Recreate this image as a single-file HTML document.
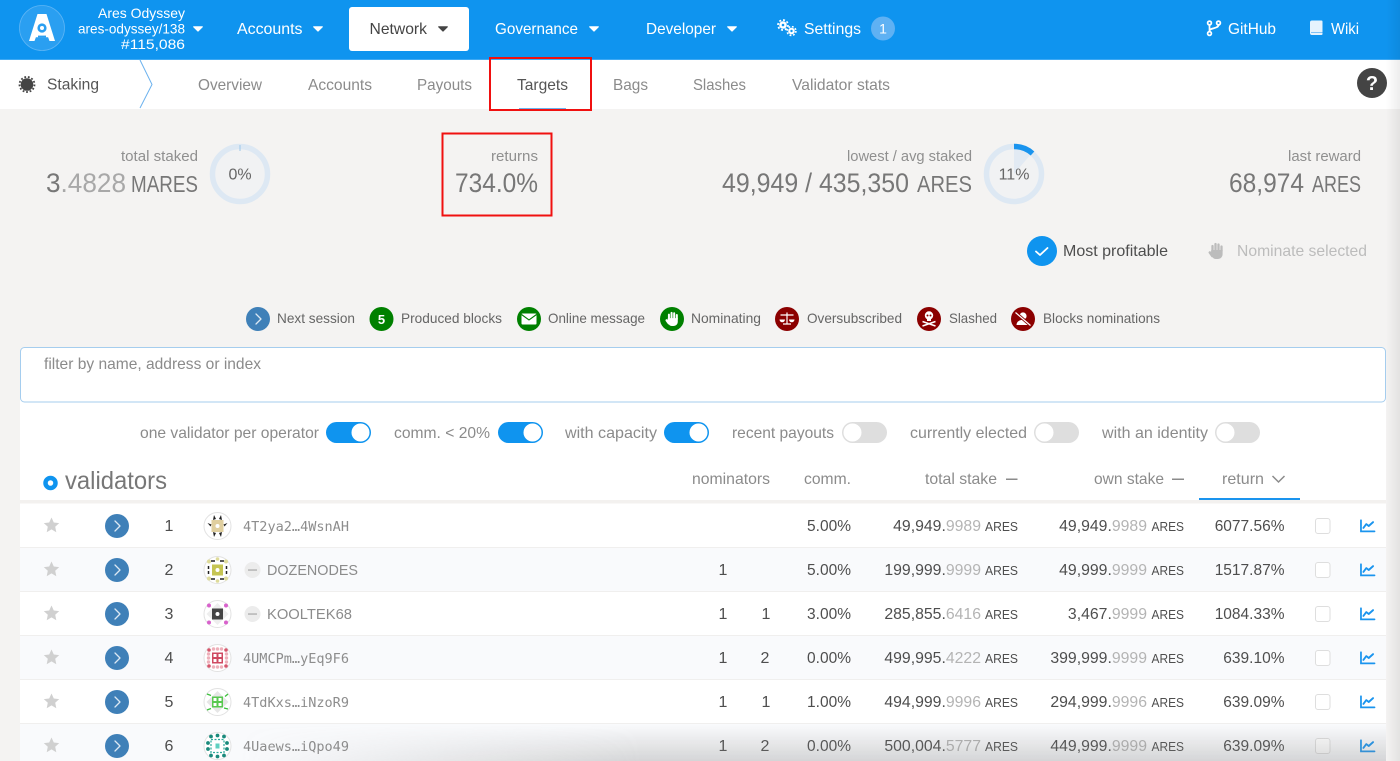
<!DOCTYPE html>
<html><head><meta charset="utf-8"><title>Staking</title>
<style>
html,body{margin:0;padding:0;width:1400px;height:761px;overflow:hidden;background:#f4f3f2}
svg{display:block}
text{font-family:"Liberation Sans",sans-serif;font-size:16px;fill:#8b8b8b}
.w{fill:#fff}.d{fill:#4e4e4e}
.t{font-size:14px;fill:#fff}
.lb{font-size:15px;fill:#8f8f8f}
.m{font-family:"DejaVu Sans Mono","Liberation Mono",monospace;font-size:13.5px;fill:#8d8d8d}
.s{font-size:14px;fill:#666}
.h{font-size:26.500px;fill:#777}
.u{font-size:23px;fill:#777}
.n{fill:#4e4e4e;text-anchor:end;font-size:15.800px}
.n tspan{fill:#b4b4b4}
.a{font-size:12.500px;fill:#4e4e4e}
.c{text-anchor:middle}
.v{fill:#4e4e4e;text-anchor:end;font-size:15.500px}
</style></head><body>
<svg width="1400" height="761" viewBox="0 0 1400 761" xmlns="http://www.w3.org/2000/svg">
<defs>
<linearGradient id="g1" x1="0" x2="1" y1="0" y2="0"><stop offset="0" stop-color="#000" stop-opacity="0"/><stop offset="1" stop-color="#000" stop-opacity=".07"/></linearGradient>
<linearGradient id="g2" x1="0" x2="0" y1="0" y2="1"><stop offset="0" stop-color="#888" stop-opacity="0"/><stop offset="1" stop-color="#888" stop-opacity=".32"/></linearGradient>
<linearGradient id="g3" x1="0" x2="1" y1="0" y2="0"><stop offset="0" stop-color="#fff" stop-opacity="0"/><stop offset=".35" stop-color="#fff" stop-opacity="1"/></linearGradient>
<mask id="fade" maskUnits="userSpaceOnUse" x="240" y="720" width="1146" height="41"><rect x="240" y="720" width="1146" height="41" fill="url(#g3)"/></mask>
<symbol id="star" viewBox="0 0 16 16"><path d="M8 .5l2.3 5 5.4.6-4 3.700 1.100 5.400L8 12.400l-4.800 2.800 1.100-5.400-4-3.700 5.400-.6z" fill="#d0d0d0"/></symbol>
<symbol id="go" viewBox="0 0 24 24"><circle cx="12" cy="12" r="12" fill="#3f80b8"/><path d="M10 7l5 5-5 5" fill="none" stroke="#dbe8f3" stroke-width="1.300" stroke-linecap="round" stroke-linejoin="round"/></symbol>
<symbol id="chart" viewBox="0 0 16 14"><path d="M1 1v11.500h14" fill="none" stroke="#1a94ee" stroke-width="1.800" stroke-linecap="round"/><path d="M3.500 9l3-4 2.500 2 4.500-4" fill="none" stroke="#1a94ee" stroke-width="1.900" stroke-linecap="round" stroke-linejoin="round"/></symbol>
<symbol id="care" viewBox="0 0 10 6"><path d="M.6.3h8.800a.5.5 0 0 1 .4.8L5.400 5.500a.6.6 0 0 1-.8 0L.2 1.100A.5.5 0 0 1 .6.3z"/></symbol>
<symbol id="hand" viewBox="0 0 16 18"><g stroke="currentColor" stroke-width="2.300" stroke-linecap="round" fill="none"><path d="M4.500 9V4M7.500 8V2M10.500 8V2.500M13.500 9V4.500"/><path d="M1.800 10.500l2.500 3.500" stroke-width="2.500"/></g><path d="M3.300 8h11.300v4c0 3-2 5-5 5H8c-2 0-3-1-4-2.500L2.800 11z" fill="currentColor"/></symbol>
</defs>

<!-- top bar -->
<rect width="1400" height="60" fill="#0f94ef"/>
<circle cx="42" cy="28" r="22.500" fill="#2a9ff1" stroke="#5db5f5" stroke-width=".8"/>
<path d="M37.500 14h9L55 41h-5.500l-1.400-3.800H35.900L34.500 41H29z" fill="#fff"/>
<circle cx="42" cy="28" r="4.600" fill="#2a9ff1"/><circle cx="42" cy="28" r="2" fill="#fff"/>
<rect x="38" y="35.600" width="8" height="1.800" fill="#2a9ff1"/>
<text class="t" x="98" y="18" textLength="87" lengthAdjust="spacingAndGlyphs">Ares Odyssey</text>
<text class="t" x="78" y="33.500" textLength="107" lengthAdjust="spacingAndGlyphs">ares-odyssey/138</text>
<text class="t" x="121" y="49" textLength="64" lengthAdjust="spacingAndGlyphs">#115,086</text>
<use href="#care" x="193" y="26" width="10" height="6" fill="#fff"/>
<text class="w" x="237" y="34" textLength="65.500" lengthAdjust="spacingAndGlyphs">Accounts</text>
<use href="#care" x="313" y="26" width="10" height="6" fill="#fff"/>
<rect x="349" y="7" width="120" height="44" rx="3" fill="#fff"/>
<text x="369.500" y="34" style="fill:#444" textLength="57.500" lengthAdjust="spacingAndGlyphs">Network</text>
<use href="#care" x="438" y="26" width="10" height="6" fill="#444"/>
<text class="w" x="495" y="34" textLength="83" lengthAdjust="spacingAndGlyphs">Governance</text>
<use href="#care" x="589" y="26" width="10" height="6" fill="#fff"/>
<text class="w" x="646" y="34" textLength="70" lengthAdjust="spacingAndGlyphs">Developer</text>
<use href="#care" x="727" y="26" width="10" height="6" fill="#fff"/>
<circle cx="783" cy="25" r="3.800" fill="#fff"/><circle cx="783" cy="25" r="5" fill="none" stroke="#fff" stroke-width="1.700" stroke-dasharray="2 1.900"/><circle cx="783" cy="25" r="1.300" fill="#0f94ef"/>
<circle cx="791.500" cy="31" r="3.300" fill="#fff"/><circle cx="791.500" cy="31" r="4.400" fill="none" stroke="#fff" stroke-width="1.600" stroke-dasharray="1.800 1.700"/><circle cx="791.500" cy="31" r="1.200" fill="#0f94ef"/>
<text class="w" x="804" y="34" textLength="57" lengthAdjust="spacingAndGlyphs">Settings</text>
<circle cx="883" cy="28.500" r="12" fill="#5fb1f3"/>
<text class="t c" x="883" y="33.500">1</text>
<g fill="none" stroke="#fff" stroke-width="1.700"><circle cx="1209.500" cy="23" r="1.900"/><circle cx="1209.500" cy="33.500" r="1.900"/><circle cx="1218.500" cy="23" r="1.900"/><path d="M1209.500 25v6.500M1218.500 25c0 4-9 2.500-9 6"/></g>
<text class="w" x="1228" y="34" textLength="48" lengthAdjust="spacingAndGlyphs">GitHub</text>
<path d="M1312 20.500h9.500a1 1 0 0 1 1 1v12.500a1 1 0 0 1-1 1H1312a2 2 0 0 1-2-2V22.500a2 2 0 0 1 2-2z" fill="#e6f3fd"/><path d="M1311 32.500h11.500" stroke="#7fc1f5" stroke-width="1"/>
<text class="w" x="1331" y="34" textLength="28" lengthAdjust="spacingAndGlyphs">Wiki</text>
<rect y="59" width="1400" height="1" fill="#3fa9f3"/>

<!-- sub nav -->
<rect y="60" width="1400" height="49" fill="#fff"/>
<circle cx="27" cy="84.500" r="6.300" fill="#444"/><circle cx="27" cy="84.500" r="7.500" fill="none" stroke="#444" stroke-width="1.800" stroke-dasharray="1.800 1.800"/>
<text x="47" y="89.500" style="fill:#555" textLength="52" lengthAdjust="spacingAndGlyphs">Staking</text>
<path d="M140 60l12 24.500L140 108" fill="none" stroke="#6cb2ee" stroke-width="1"/>
<text x="198" y="90" textLength="64" lengthAdjust="spacingAndGlyphs">Overview</text>
<text x="308" y="90" textLength="64" lengthAdjust="spacingAndGlyphs">Accounts</text>
<text x="417" y="90" textLength="55" lengthAdjust="spacingAndGlyphs">Payouts</text>
<text x="517" y="90" style="fill:#555" textLength="51" lengthAdjust="spacingAndGlyphs">Targets</text>
<text x="613" y="90" textLength="35" lengthAdjust="spacingAndGlyphs">Bags</text>
<text x="693" y="90" textLength="53" lengthAdjust="spacingAndGlyphs">Slashes</text>
<text x="792" y="90" textLength="98" lengthAdjust="spacingAndGlyphs">Validator stats</text>
<rect x="519" y="108" width="47" height="1.500" fill="#6cb2ee"/>
<rect x="490" y="58" width="101" height="52" fill="none" stroke="#f01010" stroke-width="2"/>
<circle cx="1372" cy="83" r="15" fill="#444"/>
<text class="w c" x="1372" y="90" style="font-size:20px;font-weight:bold">?</text>

<!-- stats -->
<text class="lb" x="121" y="161" textLength="77" lengthAdjust="spacingAndGlyphs">total staked</text>
<text class="h" x="46" y="192" textLength="80" lengthAdjust="spacingAndGlyphs">3<tspan fill="#a8a8a8">.4828</tspan></text>
<text class="u" x="131" y="192" textLength="67" lengthAdjust="spacingAndGlyphs">MARES</text>
<circle cx="240" cy="174" r="27.500" fill="#f1f2f3" stroke="#dde8f3" stroke-width="5.500"/>
<rect x="239.500" y="145" width="1" height="6" fill="#9cc6ea"/>
<text class="c" x="240" y="179.500" style="font-size:16px;fill:#666">0%</text>

<text class="lb" x="491" y="161" textLength="47" lengthAdjust="spacingAndGlyphs">returns</text>
<text class="h" x="455" y="192" textLength="83" lengthAdjust="spacingAndGlyphs">734.0%</text>
<rect x="442.500" y="133.500" width="109" height="82" fill="none" stroke="#f01010" stroke-width="2"/>

<text class="lb" x="847" y="161" textLength="125" lengthAdjust="spacingAndGlyphs">lowest / avg staked</text>
<text class="h" x="722" y="192" textLength="187" lengthAdjust="spacingAndGlyphs">49,949 / 435,350</text>
<text class="u" x="917" y="192" textLength="55" lengthAdjust="spacingAndGlyphs">ARES</text>
<circle cx="1014" cy="174" r="27.500" fill="#f1f2f3" stroke="#dde8f3" stroke-width="5.500"/>
<path d="M1014 174v-27a27 27 0 0 1 17.500 6.500z" fill="#e2eaf3"/>
<path d="M1014 146.500a27.500 27.500 0 0 1 18.500 7" fill="none" stroke="#1a94ee" stroke-width="5.500"/>
<text class="c" x="1014" y="179.500" style="font-size:16px;fill:#666">11%</text>

<text class="lb" x="1288" y="161" textLength="73" lengthAdjust="spacingAndGlyphs">last reward</text>
<text class="h" x="1229" y="192" textLength="75" lengthAdjust="spacingAndGlyphs">68,974</text>
<text class="u" x="1312" y="192" textLength="49" lengthAdjust="spacingAndGlyphs">ARES</text>

<!-- action buttons -->
<circle cx="1042" cy="251" r="15" fill="#0f94ef"/>
<path d="M1036 251.500l4 3.500 7.500-7" fill="none" stroke="#fff" stroke-width="1.800" stroke-linecap="round" stroke-linejoin="round"/>
<text x="1063" y="256" style="fill:#4e4e4e" textLength="105" lengthAdjust="spacingAndGlyphs">Most profitable</text>
<use href="#hand" x="1208" y="242" width="16" height="18" color="#bcbcbc"/>
<text x="1237" y="256" style="fill:#bcbcbc" textLength="130" lengthAdjust="spacingAndGlyphs">Nominate selected</text>

<!-- legend -->
<use href="#go" x="246" y="307" width="24" height="24"/>
<text class="s" x="277" y="323" textLength="78" lengthAdjust="spacingAndGlyphs">Next session</text>
<circle cx="381.500" cy="319" r="12" fill="#008000"/>
<text class="w c" x="381.500" y="324" style="font-size:13px;font-weight:bold">5</text>
<text class="s" x="401" y="323" textLength="101" lengthAdjust="spacingAndGlyphs">Produced blocks</text>
<circle cx="529" cy="319" r="12" fill="#008000"/>
<rect x="521.500" y="313.500" width="15" height="11" rx="1" fill="#fff"/><path d="M521.500 314.500l7.500 5.500 7.500-5.500" fill="none" stroke="#008000" stroke-width="1.100"/>
<text class="s" x="548" y="323" textLength="97" lengthAdjust="spacingAndGlyphs">Online message</text>
<circle cx="672" cy="319" r="12" fill="#008000"/>
<use href="#hand" x="665" y="311" width="14" height="16" color="#fff"/>
<text class="s" x="691" y="323" textLength="70" lengthAdjust="spacingAndGlyphs">Nominating</text>
<circle cx="787" cy="319" r="12" fill="#8b0000"/>
<path d="M787 312.500v11M783 324h8M780.500 315h13" stroke="#fff" stroke-width="1.200" fill="none"/>
<path d="M779.500 319.500h5.500a2.750 2.750 0 0 1-5.500 0zM789 319.500h5.500a2.750 2.750 0 0 1-5.500 0z" fill="#fff"/>
<text class="s" x="807" y="323" textLength="95" lengthAdjust="spacingAndGlyphs">Oversubscribed</text>
<circle cx="929" cy="319" r="12" fill="#8b0000"/>
<circle cx="929" cy="315.500" r="4.200" fill="#fff"/><rect x="927" y="318" width="4" height="3" fill="#fff"/><circle cx="927.500" cy="315.500" r="1" fill="#8b0000"/><circle cx="930.500" cy="315.500" r="1" fill="#8b0000"/>
<path d="M922.500 321.500l13 4.500M935.500 321.500l-13 4.500" stroke="#fff" stroke-width="1.500"/>
<text class="s" x="949" y="323" textLength="48" lengthAdjust="spacingAndGlyphs">Slashed</text>
<circle cx="1023" cy="319" r="12" fill="#8b0000"/>
<circle cx="1023" cy="316" r="3.600" fill="#fff"/><path d="M1016.500 325c0-7 13-7 13 0z" fill="#fff"/>
<path d="M1015.500 312.500l15 13" stroke="#8b0000" stroke-width="3"/><path d="M1015.500 312.500l15 13" stroke="#fff" stroke-width="1.200"/>
<text class="s" x="1043" y="323" textLength="117" lengthAdjust="spacingAndGlyphs">Blocks nominations</text>

<!-- panel -->
<rect x="20" y="398" width="1366" height="363" fill="#fff"/>
<rect x="20.500" y="347.500" width="1365" height="54.500" rx="4" fill="#fff" stroke="#a5cdee" stroke-width="1"/>
<text x="44" y="369" textLength="217" lengthAdjust="spacingAndGlyphs">filter by name, address or index</text>

<text x="140" y="438" textLength="179" lengthAdjust="spacingAndGlyphs">one validator per operator</text>
<rect x="326" y="422" width="45" height="21" rx="10.500" fill="#0f94ef"/><circle cx="360.500" cy="432.500" r="9" fill="#fff"/>
<text x="394" y="438" textLength="96" lengthAdjust="spacingAndGlyphs">comm. &lt; 20%</text>
<rect x="498" y="422" width="45" height="21" rx="10.500" fill="#0f94ef"/><circle cx="532.500" cy="432.500" r="9" fill="#fff"/>
<text x="565" y="438" textLength="92" lengthAdjust="spacingAndGlyphs">with capacity</text>
<rect x="664" y="422" width="45" height="21" rx="10.500" fill="#0f94ef"/><circle cx="698.500" cy="432.500" r="9" fill="#fff"/>
<text x="732" y="438" textLength="102" lengthAdjust="spacingAndGlyphs">recent payouts</text>
<rect x="842" y="422" width="45" height="21" rx="10.500" fill="#dedede"/><circle cx="852.500" cy="432.500" r="9" fill="#fff"/>
<text x="910" y="438" textLength="117" lengthAdjust="spacingAndGlyphs">currently elected</text>
<rect x="1034" y="422" width="45" height="21" rx="10.500" fill="#dedede"/><circle cx="1044.500" cy="432.500" r="9" fill="#fff"/>
<text x="1102" y="438" textLength="106" lengthAdjust="spacingAndGlyphs">with an identity</text>
<rect x="1215" y="422" width="45" height="21" rx="10.500" fill="#dedede"/><circle cx="1225.500" cy="432.500" r="9" fill="#fff"/>

<!-- table header -->
<circle cx="50.500" cy="483" r="5" fill="#fff" stroke="#0f94ef" stroke-width="4.500"/>
<text x="65" y="489" style="font-size:25px;fill:#777" textLength="102" lengthAdjust="spacingAndGlyphs">validators</text>
<text x="692" y="484" textLength="78" lengthAdjust="spacingAndGlyphs">nominators</text>
<text x="804" y="484" textLength="47" lengthAdjust="spacingAndGlyphs">comm.</text>
<text x="925" y="484" textLength="72" lengthAdjust="spacingAndGlyphs">total stake</text>
<rect x="1006" y="478.500" width="11.500" height="1.500" fill="#8b8b8b"/>
<text x="1094" y="484" textLength="70" lengthAdjust="spacingAndGlyphs">own stake</text>
<rect x="1172" y="478.500" width="12" height="1.500" fill="#8b8b8b"/>
<text x="1222" y="484" textLength="42" lengthAdjust="spacingAndGlyphs">return</text>
<path d="M1272.500 476l6 6 6-6" fill="none" stroke="#8b8b8b" stroke-width="1.500"/>
<rect x="20" y="500" width="1366" height="3.500" fill="#f3f1ef"/>
<rect x="1199" y="498" width="101" height="2" fill="#1a94ee"/>

<!-- rows backgrounds -->
<rect x="20" y="547" width="1366" height="44" fill="#f9fafc"/>
<rect x="20" y="635" width="1366" height="44" fill="#f9fafc"/>
<rect x="20" y="723" width="1366" height="38" fill="#f9fafc"/>
<path d="M20 547.500h1366M20 591.500h1366M20 635.500h1366M20 679.500h1366M20 723.500h1366" stroke="#f0efee" stroke-width="1"/>

<!-- stars -->
<use href="#star" x="43.500" y="517" width="16" height="16"/>
<use href="#star" x="43.500" y="561" width="16" height="16"/>
<use href="#star" x="43.500" y="605" width="16" height="16"/>
<use href="#star" x="43.500" y="649" width="16" height="16"/>
<use href="#star" x="43.500" y="693" width="16" height="16"/>
<use href="#star" x="43.500" y="737" width="16" height="16"/>
<!-- chevrons -->
<use href="#go" x="105" y="514" width="24" height="24"/>
<use href="#go" x="105" y="558" width="24" height="24"/>
<use href="#go" x="105" y="602" width="24" height="24"/>
<use href="#go" x="105" y="646" width="24" height="24"/>
<use href="#go" x="105" y="690" width="24" height="24"/>
<use href="#go" x="105" y="734" width="24" height="24"/>
<!-- ranks -->
<text class="d c" x="169" y="531">1</text>
<text class="d c" x="169" y="575">2</text>
<text class="d c" x="169" y="619">3</text>
<text class="d c" x="169" y="663">4</text>
<text class="d c" x="169" y="707">5</text>
<text class="d c" x="169" y="751">6</text>

<!-- identicons -->
<g stroke="#e2e2e2" fill="#fff"><circle cx="217.500" cy="526" r="13.500"/><circle cx="217.500" cy="570" r="13.500"/><circle cx="217.500" cy="614" r="13.500"/><circle cx="217.500" cy="658" r="13.500"/><circle cx="217.500" cy="702" r="13.500"/><circle cx="217.500" cy="746" r="13.500"/></g>
<g><rect x="211.500" y="520" width="12" height="12" fill="#e0cf9f"/><circle cx="217.500" cy="526" r="2" fill="#fff"/>
<path d="M214 515l2 4-3 1zM221 515l-2 4 3 1zM207.500 523l4 1.500-1 2zM227.500 523l-4 1.500 1 2zM214 537l2-4-3-1zM221 537l-2-4 3-1z" fill="#222"/></g>
<g><circle cx="209" cy="561.500" r="2" fill="#dedb9a"/><circle cx="226" cy="561.500" r="2" fill="#dedb9a"/><circle cx="209" cy="578.500" r="2" fill="#dedb9a"/><circle cx="226" cy="578.500" r="2" fill="#dedb9a"/><circle cx="217.500" cy="559" r="1.800" fill="#dedb9a"/><circle cx="217.500" cy="581" r="1.800" fill="#dedb9a"/>
<path d="M211 561h4M220 561h4M211 579h4M220 579h4M208.500 566v3M226.500 566v3M208.500 571v3M226.500 571v3" stroke="#222" stroke-width="1.500"/><rect x="212" y="564.500" width="11" height="11" fill="#c6c552"/><circle cx="217.500" cy="570" r="2" fill="#fff"/></g>
<g><path d="M217.500 603l11 11-11 11-11-11z" fill="#eee"/><rect x="212" y="608.500" width="11" height="11" fill="#444"/><circle cx="217.500" cy="614" r="2" fill="#fff"/>
<circle cx="209" cy="605.500" r="2" fill="#d862cc"/><circle cx="226" cy="605.500" r="2" fill="#d862cc"/><circle cx="209" cy="622.500" r="2" fill="#d862cc"/><circle cx="226" cy="622.500" r="2" fill="#d862cc"/></g>
<g><g fill="#eeb0ba"><circle cx="209" cy="650" r="1.800" fill="#d6566c"/><circle cx="226" cy="650" r="1.800" fill="#d6566c"/><circle cx="209" cy="666" r="1.800" fill="#d6566c"/><circle cx="226" cy="666" r="1.800" fill="#d6566c"/><circle cx="213.500" cy="649" r="1.700"/><circle cx="217.500" cy="649" r="1.700"/><circle cx="221.500" cy="649" r="1.700"/><circle cx="213.500" cy="667" r="1.700"/><circle cx="217.500" cy="667" r="1.700"/><circle cx="221.500" cy="667" r="1.700"/><circle cx="208.500" cy="654" r="1.700"/><circle cx="208.500" cy="658" r="1.700"/><circle cx="208.500" cy="662" r="1.700"/><circle cx="226.500" cy="654" r="1.700"/><circle cx="226.500" cy="658" r="1.700"/><circle cx="226.500" cy="662" r="1.700"/></g><rect x="212" y="652.500" width="11" height="11" fill="#cf4a62"/>
<rect x="213.500" y="654" width="3" height="3" fill="#fff"/><rect x="218.500" y="654" width="3" height="3" fill="#fff"/><rect x="213.500" y="659" width="3" height="3" fill="#fff"/><rect x="218.500" y="659" width="3" height="3" fill="#fff"/></g>
<g><path d="M217.500 691l11 11-11 11-11-11z" fill="#e6e6e6"/><rect x="212" y="696.500" width="11" height="11" fill="#58c84f"/><rect x="213.500" y="698" width="3" height="3" fill="#fff"/><rect x="218.500" y="698" width="3" height="3" fill="#fff"/><rect x="213.500" y="703" width="3" height="3" fill="#fff"/><rect x="218.500" y="703" width="3" height="3" fill="#fff"/>
<path d="M207 694l4 1.500M228 694l-3 2.500M207 710l4-1.500M228 709l-4-1" stroke="#3cc03c" stroke-width="1.300"/></g>
<g fill="#1a8a7c"><rect x="215.500" y="743.500" width="4" height="5" fill="#5fd0c0"/><rect x="211" y="739.500" width="13" height="13" fill="none" stroke="#2aa99a" stroke-width="1.200" stroke-dasharray="2 1.500"/><circle cx="211" cy="736.500" r="1.900"/><circle cx="217.500" cy="735.500" r="1.900"/><circle cx="224" cy="736.500" r="1.900"/><circle cx="208" cy="743" r="1.900"/><circle cx="227" cy="743" r="1.900"/><circle cx="208" cy="749" r="1.900"/><circle cx="227" cy="749" r="1.900"/><circle cx="211" cy="755.500" r="1.900"/><circle cx="217.500" cy="756.500" r="1.900"/><circle cx="224" cy="755.500" r="1.900"/></g>

<!-- names -->
<text class="m" x="243" y="531" textLength="106" lengthAdjust="spacingAndGlyphs">4T2ya2…4WsnAH</text>
<circle cx="252.500" cy="570" r="8" fill="#ececec"/><rect x="248" y="569.300" width="9" height="1.500" fill="#b5b5b5"/>
<text x="267" y="575" style="font-size:15px" textLength="91" lengthAdjust="spacingAndGlyphs">DOZENODES</text>
<circle cx="252.500" cy="614" r="8" fill="#ececec"/><rect x="248" y="613.300" width="9" height="1.500" fill="#b5b5b5"/>
<text x="267" y="619" style="font-size:15px" textLength="85" lengthAdjust="spacingAndGlyphs">KOOLTEK68</text>
<text class="m" x="243" y="663" textLength="106" lengthAdjust="spacingAndGlyphs">4UMCPm…yEq9F6</text>
<text class="m" x="243" y="707" textLength="106" lengthAdjust="spacingAndGlyphs">4TdKxs…iNzoR9</text>
<text class="m" x="243" y="751" textLength="106" lengthAdjust="spacingAndGlyphs">4Uaews…iQpo49</text>

<!-- nominators -->
<text class="d c" x="723" y="575">1</text>
<text class="d c" x="723" y="619">1</text><text class="d c" x="766" y="619">1</text>
<text class="d c" x="723" y="663">1</text><text class="d c" x="765" y="663">2</text>
<text class="d c" x="723" y="707">1</text><text class="d c" x="766" y="707">1</text>
<text class="d c" x="723" y="751">1</text><text class="d c" x="765" y="751">2</text>

<!-- comm -->
<text class="v" x="851" y="531">5.00%</text>
<text class="v" x="851" y="575">5.00%</text>
<text class="v" x="851" y="619">3.00%</text>
<text class="v" x="851" y="663">0.00%</text>
<text class="v" x="851" y="707">1.00%</text>
<text class="v" x="851" y="751">0.00%</text>

<!-- total stake -->
<text class="n" x="981" y="531">49,949.<tspan>9989</tspan></text><text class="a" x="985" y="531" textLength="33" lengthAdjust="spacingAndGlyphs">ARES</text>
<text class="n" x="981" y="575">199,999.<tspan>9999</tspan></text><text class="a" x="985" y="575" textLength="33" lengthAdjust="spacingAndGlyphs">ARES</text>
<text class="n" x="981" y="619">285,855.<tspan>6416</tspan></text><text class="a" x="985" y="619" textLength="33" lengthAdjust="spacingAndGlyphs">ARES</text>
<text class="n" x="981" y="663">499,995.<tspan>4222</tspan></text><text class="a" x="985" y="663" textLength="33" lengthAdjust="spacingAndGlyphs">ARES</text>
<text class="n" x="981" y="707">494,999.<tspan>9996</tspan></text><text class="a" x="985" y="707" textLength="33" lengthAdjust="spacingAndGlyphs">ARES</text>
<text class="n" x="981" y="751">500,004.<tspan>5777</tspan></text><text class="a" x="985" y="751" textLength="33" lengthAdjust="spacingAndGlyphs">ARES</text>

<!-- own stake -->
<text class="n" x="1147" y="531">49,949.<tspan>9989</tspan></text><text class="a" x="1151.500" y="531" textLength="32.500" lengthAdjust="spacingAndGlyphs">ARES</text>
<text class="n" x="1147" y="575">49,999.<tspan>9999</tspan></text><text class="a" x="1151.500" y="575" textLength="32.500" lengthAdjust="spacingAndGlyphs">ARES</text>
<text class="n" x="1147" y="619">3,467.<tspan>9999</tspan></text><text class="a" x="1151.500" y="619" textLength="32.500" lengthAdjust="spacingAndGlyphs">ARES</text>
<text class="n" x="1147" y="663">399,999.<tspan>9999</tspan></text><text class="a" x="1151.500" y="663" textLength="32.500" lengthAdjust="spacingAndGlyphs">ARES</text>
<text class="n" x="1147" y="707">294,999.<tspan>9996</tspan></text><text class="a" x="1151.500" y="707" textLength="32.500" lengthAdjust="spacingAndGlyphs">ARES</text>
<text class="n" x="1147" y="751">449,999.<tspan>9999</tspan></text><text class="a" x="1151.500" y="751" textLength="32.500" lengthAdjust="spacingAndGlyphs">ARES</text>

<!-- return -->
<text class="v" x="1284.500" y="531">6077.56%</text>
<text class="v" x="1284.500" y="575">1517.87%</text>
<text class="v" x="1284.500" y="619">1084.33%</text>
<text class="v" x="1284.500" y="663">639.10%</text>
<text class="v" x="1284.500" y="707">639.09%</text>
<text class="v" x="1284.500" y="751">639.09%</text>

<!-- checkboxes -->
<g fill="#fff" stroke="#dedede" stroke-width="1"><rect x="1315.500" y="518.500" width="14.500" height="15" rx="2.500"/><rect x="1315.500" y="562.500" width="14.500" height="15" rx="2.500"/><rect x="1315.500" y="606.500" width="14.500" height="15" rx="2.500"/><rect x="1315.500" y="650.500" width="14.500" height="15" rx="2.500"/><rect x="1315.500" y="694.500" width="14.500" height="15" rx="2.500"/><rect x="1315.500" y="738.500" width="14.500" height="15" rx="2.500"/></g>
<!-- chart icons -->
<use href="#chart" x="1360" y="519" width="15.500" height="14"/>
<use href="#chart" x="1360" y="563" width="15.500" height="14"/>
<use href="#chart" x="1360" y="607" width="15.500" height="14"/>
<use href="#chart" x="1360" y="651" width="15.500" height="14"/>
<use href="#chart" x="1360" y="695" width="15.500" height="14"/>
<use href="#chart" x="1360" y="739" width="15.500" height="14"/>

<!-- overlays -->
<rect x="240" y="725" width="1146" height="36" fill="url(#g2)" mask="url(#fade)"/>
<rect x="1386" y="0" width="14" height="761" fill="url(#g1)"/>
</svg>
</body></html>
